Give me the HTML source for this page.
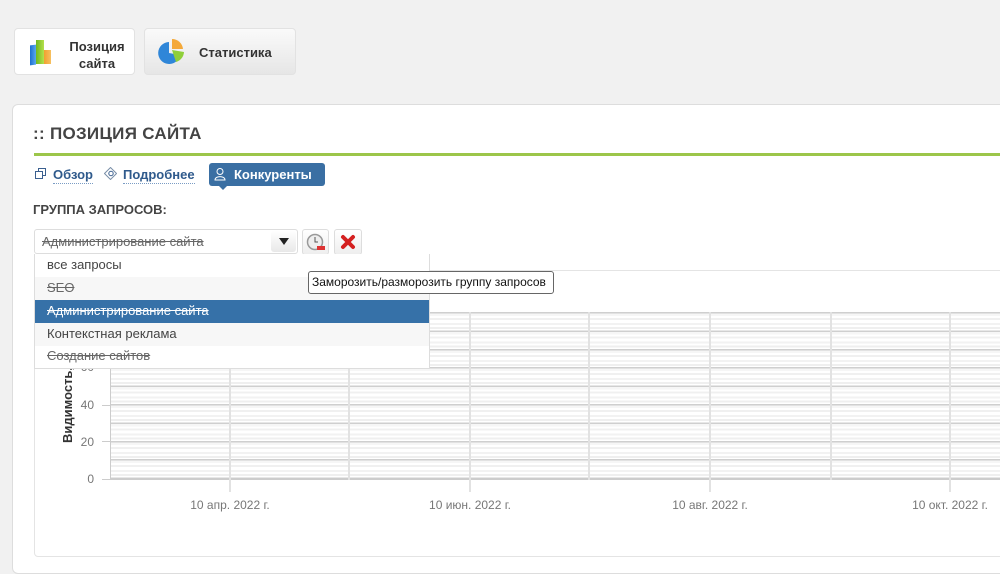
<!DOCTYPE html>
<html><head><meta charset="utf-8">
<style>
*{margin:0;padding:0;box-sizing:border-box}
body{width:1000px;height:562px;overflow:hidden;background:#f1f1f1;font-family:"Liberation Sans","DejaVu Sans",sans-serif;position:relative}
.abs{position:absolute}
.tab{position:absolute;border:1px solid #e2e2e2;border-radius:4px}
.panel{position:absolute;left:12px;top:104px;width:1000px;height:470px;background:#fff;border:1px solid #ddd;border-radius:6px}
.sub{color:#2f5a8c;font-weight:bold;font-size:13px;border-bottom:1px dotted #7a9cc4;padding-bottom:1px}
.s{text-decoration:line-through}
.item{position:absolute;left:0;width:394px;height:23px;font-size:13px;color:#444;padding-left:12px;line-height:22px}
.vl{position:absolute;top:312px;width:2px;height:180px;background:#e2e2e2}
</style></head><body>

<div class="tab" style="left:14px;top:28px;width:121px;height:47px;background:#fff">
  <div class="abs" style="left:15px;top:16px;width:6px;height:20px;background:linear-gradient(90deg,#1d6fd0,#5aa8ef);transform:skewY(-8deg)"></div>
  <div class="abs" style="left:21px;top:11px;width:8px;height:24px;background:linear-gradient(90deg,#6fb81e,#b4e04c)"></div>
  <div class="abs" style="left:29px;top:21px;width:7px;height:14px;background:linear-gradient(90deg,#f0a030,#f7c060)"></div>
  <div class="abs" style="left:50px;top:9px;width:64px;text-align:center;font-size:13px;font-weight:bold;color:#333;line-height:17px">Позиция<br>сайта</div>
</div>
<div class="tab" style="left:144px;top:28px;width:152px;height:47px;background:linear-gradient(#fafafa,#e6e6e6)">
  <svg class="abs" style="left:12px;top:9px" width="30" height="28" viewBox="0 0 30 28">
    <path d="M12 4 A11 11 0 1 0 23 17 L12 15 Z" fill="#2f86d8"/>
    <path d="M15 12 L27 14 A11 11 0 0 1 19 24 Z" fill="#8fcf3a"/>
    <path d="M15 1 A11 11 0 0 1 26 11 L15 11 Z" fill="#f4a93a"/>
  </svg>
  <div class="abs" style="left:54px;top:16px;font-size:13px;font-weight:bold;color:#333">Статистика</div>
</div>

<div class="panel"></div>
<div class="abs" style="left:33px;top:124px;font-size:17px;font-weight:bold;color:#444;letter-spacing:0.3px">:: ПОЗИЦИЯ САЙТА</div>
<div class="abs" style="left:34px;top:153px;width:966px;height:3px;background:#9cc64a"></div>

<svg class="abs" style="left:35px;top:168px" width="12" height="12" viewBox="0 0 12 12"><rect x="3.5" y="0.5" width="7" height="7" fill="none" stroke="#3a5f8f"/><rect x="0.5" y="3.5" width="7" height="7" fill="#fff" stroke="#3a5f8f"/></svg>
<div class="abs" style="left:53px;top:166px"><span class="sub">Обзор</span></div>
<svg class="abs" style="left:104px;top:167px" width="13" height="13" viewBox="0 0 13 13"><path d="M6.5 .5 L12.5 6.5 L6.5 12.5 L.5 6.5 Z" fill="none" stroke="#7a8fa8"/><circle cx="7" cy="6.5" r="2.2" fill="none" stroke="#3a5f8f"/></svg>
<div class="abs" style="left:123px;top:166px"><span class="sub">Подробнее</span></div>
<div class="abs" style="left:209px;top:163px;width:116px;height:23px;background:#3a6fa3;border-radius:3px"></div>
<div class="abs" style="left:219px;top:186px;width:0;height:0;border-left:4px solid transparent;border-right:4px solid transparent;border-top:4px solid #3a6fa3"></div>
<svg class="abs" style="left:214px;top:167px" width="14" height="15" viewBox="0 0 14 15"><circle cx="6" cy="4.5" r="3" fill="none" stroke="#fff"/><path d="M1 13 C1 8.5 11 8.5 11 13 Z" fill="none" stroke="#fff"/></svg>
<div class="abs" style="left:234px;top:167px;font-size:13px;font-weight:bold;color:#fff">Конкуренты</div>

<div class="abs" style="left:33px;top:202px;font-size:13px;font-weight:bold;color:#444">ГРУППА ЗАПРОСОВ:</div>

<div class="abs" style="left:34px;top:229px;width:264px;height:25px;border:1px solid #ddd;border-radius:3px;background:#fff"></div>
<div class="abs s" style="left:42px;top:234px;font-size:13px;color:#666">Администрирование сайта</div>
<div class="abs" style="left:271px;top:231px;width:25px;height:21px;background:linear-gradient(#fff,#e8e8e8);border-radius:3px"></div>
<div class="abs" style="left:279px;top:238px;border-left:5px solid transparent;border-right:5px solid transparent;border-top:7px solid #222"></div>
<div class="abs" style="left:302px;top:229px;width:27px;height:26px;border:1px solid #ddd;border-radius:3px;background:linear-gradient(#fff,#eee)"></div>
<svg class="abs" style="left:306px;top:233px" width="20" height="19" viewBox="0 0 20 19"><circle cx="9" cy="9" r="7.5" fill="#eee" stroke="#999" stroke-width="1.5"/><path d="M9 4 V9 H12" stroke="#555" fill="none"/><rect x="11" y="13" width="8" height="4" fill="#d33"/></svg>
<div class="abs" style="left:334px;top:229px;width:28px;height:26px;border:1px solid #ddd;border-radius:3px;background:linear-gradient(#fff,#eee)"></div>
<svg class="abs" style="left:340px;top:234px" width="16" height="16" viewBox="0 0 16 16"><path d="M3 3 L13 13 M13 3 L3 13" stroke="#d42020" stroke-width="4" stroke-linecap="round"/></svg>

<!-- chart box -->
<div class="abs" style="left:34px;top:270px;width:980px;height:287px;border:1px solid #e4e4e4;border-radius:4px;background:#fff"></div>
<div class="abs" style="left:110px;top:312px;width:890px;height:168px;
background:repeating-linear-gradient(180deg,#cfcfcf 0,#cfcfcf 1.5px,#f6f6f6 1.5px,#f6f6f6 4px,#fff 4px,#fff 6px,#f0f0f0 6px,#f0f0f0 8px,#fff 8px,#fff 11px,#f2f2f2 11px,#f2f2f2 13px,#fff 13px,#fff 15px,#efefef 15px,#efefef 17px,#fff 17px,#fff 18.4px);
border-left:1px solid #ccc;border-bottom:2px solid #ccc"></div>
<div class="vl" style="left:229px"></div>
<div class="vl" style="left:348px;height:168px"></div>
<div class="vl" style="left:469px"></div>
<div class="vl" style="left:588px;height:168px"></div>
<div class="vl" style="left:709px"></div>
<div class="vl" style="left:830px;height:168px"></div>
<div class="vl" style="left:949px"></div>
<div class="abs" style="left:60px;top:360px;width:34px;text-align:right;font-size:12px;color:#777">60</div>
<div class="abs" style="left:60px;top:398px;width:34px;text-align:right;font-size:12px;color:#777">40</div>
<div class="abs" style="left:60px;top:435px;width:34px;text-align:right;font-size:12px;color:#777">20</div>
<div class="abs" style="left:60px;top:472px;width:34px;text-align:right;font-size:12px;color:#777">0</div>
<div class="abs" style="left:102px;top:405px;width:8px;height:1px;background:#ccc"></div>
<div class="abs" style="left:102px;top:441px;width:8px;height:1px;background:#ccc"></div>
<div class="abs" style="left:102px;top:479px;width:8px;height:1px;background:#ccc"></div>
<div class="abs" style="left:60px;top:443px;transform-origin:0 0;transform:rotate(-90deg);font-size:13px;font-weight:bold;color:#333;white-space:nowrap">Видимость, %</div>
<div class="abs" style="left:170px;top:498px;width:120px;text-align:center;font-size:12px;color:#777">10 апр. 2022 г.</div>
<div class="abs" style="left:410px;top:498px;width:120px;text-align:center;font-size:12px;color:#777">10 июн. 2022 г.</div>
<div class="abs" style="left:650px;top:498px;width:120px;text-align:center;font-size:12px;color:#777">10 авг. 2022 г.</div>
<div class="abs" style="left:890px;top:498px;width:120px;text-align:center;font-size:12px;color:#777">10 окт. 2022 г.</div>

<!-- dropdown list -->
<div class="abs" style="left:34px;top:254px;width:396px;height:115px;background:#fff;border:1px solid #ddd;border-top:none;overflow:hidden">
  <div class="item" style="top:0">все запросы</div>
  <div class="item s" style="top:23px;background:#f7f7f7;color:#666">SEO</div>
  <div class="item s" style="top:46px;background:#3671a8;color:#fff">Администрирование сайта</div>
  <div class="item" style="top:69px;background:#f7f7f7">Контекстная реклама</div>
  <div class="item s" style="top:91px;color:#666">Создание сайтов</div>
</div>

<div class="abs" style="left:308px;top:271px;width:246px;height:23px;background:#fff;border:1px solid #666;border-radius:3px;font-size:12px;color:#111;line-height:21px;padding-left:3px;white-space:nowrap">Заморозить/разморозить группу запросов</div>
</body></html>
